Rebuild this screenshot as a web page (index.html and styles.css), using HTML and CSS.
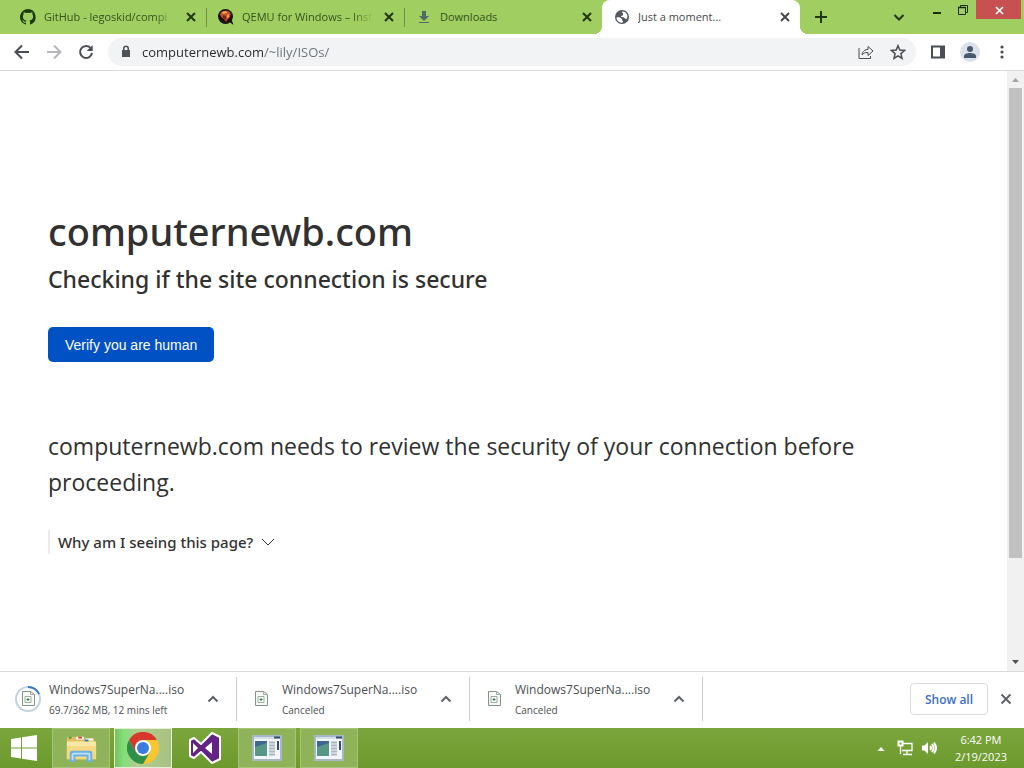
FILE: index.html
```
<!DOCTYPE html>
<html lang="en">
<head>
<meta charset="utf-8">
<title>Just a moment...</title>
<link rel="stylesheet" href="styles.css">
</head>
<body>
<header class="browser">
  <div class="tab-strip">
    <nav class="tabs">
      <div class="tab">
        <svg class="favicon" viewBox="0 0 16 16"><path fill="#1b3a12" d="M8 0a8 8 0 0 0-2.500 15.600c.4.1.5-.2.5-.4v-1.500c-2.200.5-2.700-1-2.700-1-.4-.9-.9-1.200-.9-1.200-.7-.5.1-.5.1-.5.8.1 1.200.8 1.200.8.7 1.300 1.900.9 2.300.7.1-.5.3-.9.5-1.100-1.800-.2-3.600-.9-3.600-4 0-.9.3-1.600.8-2.100-.1-.2-.4-1 .1-2.100 0 0 .7-.2 2.200.8a7.600 7.600 0 0 1 4 0c1.500-1 2.200-.8 2.200-.8.4 1.100.2 1.900.1 2.100.5.6.8 1.300.8 2.100 0 3.100-1.900 3.700-3.700 3.900.3.3.6.8.6 1.500v2.200c0 .2.1.5.6.4A8 8 0 0 0 8 0z"/></svg>
        <a class="title fade" href="#">GitHub - legoskid/compi</a>
        <button class="close" type="button" aria-label="Close tab"><svg viewBox="0 0 16 16"><path d="M4 4l8 8M12 4l-8 8"/></svg></button>
      </div>
      <div class="tab">
        <svg class="favicon" viewBox="0 0 16 16"><circle cx="7.500" cy="7.500" r="7.500" fill="#17110f"/><path fill="#17110f" d="M10 12l3-3 2.500 7z"/><path fill="#c4502c" d="M2 5c1-3 5-4 8-3 3 1 3 4 2 6l-3 3-1 2-2-3C4 9 2 7 2 5z"/><path fill="#f6a04d" d="M4 3l4-1 1 2-4 1zM9 6l2-1v3L9 9z"/><path fill="#7e2415" d="M5 6l3 1v4L5 9z"/></svg>
        <a class="title fade" href="#">QEMU for Windows – Inst</a>
        <button class="close" type="button" aria-label="Close tab"><svg viewBox="0 0 16 16"><path d="M4 4l8 8M12 4l-8 8"/></svg></button>
      </div>
      <div class="tab">
        <svg class="favicon" viewBox="0 0 16 16"><path fill="#536b67" d="M6 2h4v5h3l-5 5-5-5h3zM3 13h10v1H3z"/></svg>
        <a class="title" href="#">Downloads</a>
        <button class="close" type="button" aria-label="Close tab"><svg viewBox="0 0 16 16"><path d="M4 4l8 8M12 4l-8 8"/></svg></button>
      </div>
      <div class="tab active">
        <svg class="favicon" viewBox="0 0 16 16"><circle cx="8" cy="8" r="7" fill="#54575b"/><path fill="#fff" d="M2.500 8.500c2-.5 4 0 5 1s0 2 1.500 2.500l-.5 1.700C5 14 2.500 11.500 2.500 8.500zM8 2.600c-.5 1 .2 1.400 1 1.400v2c0 1-2 .5-2 1.500s2 .6 3 1 .8 1.500 2 1.500l1-.6C14.500 6 12 2.500 8 2.600z"/></svg>
        <a class="title" href="#">Just a moment...</a>
        <button class="close" type="button" aria-label="Close tab"><svg viewBox="0 0 16 16"><path d="M4 4l8 8M12 4l-8 8"/></svg></button>
      </div>
      <button class="new-tab" type="button" aria-label="New tab"><svg viewBox="0 0 16 16"><path d="M8 2v12M2 8h12"/></svg></button>
    </nav>
    <div class="win-controls">
      <button class="tab-search" type="button" aria-label="Search tabs"><svg viewBox="0 0 16 16"><path d="M3.500 6L8 10.500 12.500 6"/></svg></button>
      <button class="win-btn" type="button" aria-label="Minimize"><svg viewBox="0 0 16 16"><path d="M4 11h8"/></svg></button>
      <button class="win-btn" type="button" aria-label="Restore"><svg viewBox="0 0 16 16"><path d="M3.500 5.500h7v7h-7zM5.500 5V3.500h7v7H11" stroke-width="1"/><path d="M3 5.500h8" stroke-width="1.500"/></svg></button>
      <button class="win-close" type="button" aria-label="Close window"><svg viewBox="0 0 16 16"><path stroke-width="1.700" d="M5 5l7 7M12 5l-7 7"/></svg></button>
    </div>
  </div>
  <div class="toolbar">
    <button class="tool" type="button" aria-label="Back"><svg viewBox="0 0 16 16"><path d="M15 8H2M8 1.500L1.500 8 8 14.500"/></svg></button>
    <button class="tool" type="button" aria-label="Forward" disabled><svg viewBox="0 0 16 16"><path d="M1 8h13M8 1.500L14.500 8 8 14.500"/></svg></button>
    <button class="tool" type="button" aria-label="Reload"><svg viewBox="0 0 16 16"><path d="M13 4.500A6 6 0 1 0 14 9"/><path d="M14.700 1v6H8.700z" fill="#4a4d51" stroke="none"/></svg></button>
    <div class="omnibox">
      <svg class="lock" viewBox="0 0 16 16"><path fill="#4f5256" d="M5 6V4.500a3 3 0 0 1 6 0V6h1v7H4V6zm1.500 0h3V4.500a1.500 1.500 0 0 0-3 0z"/></svg>
      <input class="url" type="text" aria-label="Address" value="computernewb.com/~lily/ISOs/">
      <button class="tool" type="button" aria-label="Share"><svg class="thin" viewBox="0 0 16 16"><path d="M1 4v10.500h11.500V12M4 11c.5-4 3-5.500 6-5.500V2.500L15 7l-5 4.500v-3c-3 0-4.500.5-6 2.500z"/></svg></button>
      <button class="tool" type="button" aria-label="Bookmark"><svg class="thin" viewBox="0 0 16 16"><path stroke-width="1.500" d="M8 1.700l1.800 4.400 4.700.4L10.900 9.600l1.100 4.700L8 11.800l-4 2.500 1.100-4.700L1.500 6.500l4.700-.4z"/></svg></button>
    </div>
    <button class="tool side" type="button" aria-label="Side panel"><svg viewBox="0 0 16 16"><path d="M2 2.500h12v11H2z"/><path d="M10 2h4.500v12H10z" fill="#4a4d51" stroke="none"/></svg></button>
    <button class="tool" type="button" aria-label="Profile"><svg class="avatar" viewBox="0 0 20 20"><circle cx="10" cy="10" r="10" fill="#dbe1ec"/><circle cx="10" cy="7" r="3" fill="#49596b"/><path fill="#49596b" d="M4 16v-2c0-4 12-4 12 0v2z"/></svg></button>
    <button class="tool" type="button" aria-label="Menu"><svg viewBox="0 0 16 16"><g fill="#4a4d51" stroke="none"><circle cx="8" cy="3" r="1.600"/><circle cx="8" cy="8" r="1.600"/><circle cx="8" cy="13" r="1.600"/></g></svg></button>
  </div>
</header>

<div class="viewport">
  <main class="challenge">
    <h1>computernewb.com</h1>
    <h2>Checking if the site connection is secure</h2>
    <button class="verify" type="button">Verify you are human</button>
    <p class="review">computernewb.com needs to review the security of your connection before proceeding.</p>
    <button class="why" type="button">Why am I seeing this page? <svg viewBox="0 0 14 8"><path d="M1 1l6 6 6-6"/></svg></button>
  </main>
  <div class="scrollbar">
    <svg class="up" viewBox="0 0 17 17"><path d="M5 11l3.500-4 3.500 4z"/></svg>
    <div class="track"><div class="thumb"></div></div>
    <svg class="down" viewBox="0 0 17 17"><path d="M5 6l3.500 4L12 6z"/></svg>
  </div>
</div>

<section class="downloads">
  <div class="download">
    <svg class="file" viewBox="0 0 28 28"><circle cx="14" cy="14" r="12" fill="none" stroke="#c3d3dc" stroke-width="2"/><path d="M14 2a12 12 0 0 1 11 7" fill="none" stroke="#3977c6" stroke-width="2"/><path d="M8.500 6.500h8l4 3v11h-12z" fill="#f7faf7" stroke="#84938a"/><path d="M16.500 6.500v3h4M11 11.500h6v6h-6z" fill="none" stroke="#9dada2"/><path d="M14 13v3M12.500 14.500h3" stroke="#3d8350"/></svg>
    <div class="info"><a class="name" href="#">Windows7SuperNa....iso</a><span class="status">69.7/362 MB, 12 mins left</span></div>
    <button class="more" type="button" aria-label="Options"><svg viewBox="0 0 16 16"><path d="M3.500 10.500L8 6l4.500 4.500"/></svg></button>
  </div>
  <div class="download">
    <svg class="file" viewBox="0 0 28 28"><path d="M8.500 6.500h8l4 3v11h-12z" fill="#f7faf7" stroke="#84938a"/><path d="M16.500 6.500v3h4M11 11.500h6v6h-6z" fill="none" stroke="#9dada2"/><path d="M14 13v3M12.500 14.500h3" stroke="#3d8350"/></svg>
    <div class="info"><a class="name" href="#">Windows7SuperNa....iso</a><span class="status">Canceled</span></div>
    <button class="more" type="button" aria-label="Options"><svg viewBox="0 0 16 16"><path d="M3.500 10.500L8 6l4.500 4.500"/></svg></button>
  </div>
  <div class="download">
    <svg class="file" viewBox="0 0 28 28"><path d="M8.500 6.500h8l4 3v11h-12z" fill="#f7faf7" stroke="#84938a"/><path d="M16.500 6.500v3h4M11 11.500h6v6h-6z" fill="none" stroke="#9dada2"/><path d="M14 13v3M12.500 14.500h3" stroke="#3d8350"/></svg>
    <div class="info"><a class="name" href="#">Windows7SuperNa....iso</a><span class="status">Canceled</span></div>
    <button class="more" type="button" aria-label="Options"><svg viewBox="0 0 16 16"><path d="M3.500 10.500L8 6l4.500 4.500"/></svg></button>
  </div>
  <button class="show-all" type="button">Show all</button>
  <button class="more" type="button" aria-label="Close downloads bar"><svg viewBox="0 0 16 16"><path d="M3.500 3.500l9 9M12.500 3.500l-9 9"/></svg></button>
</section>

<footer class="taskbar">
  <button class="start" type="button" aria-label="Start"><svg viewBox="0 0 28 28"><path fill="#fff" d="M1 5l10-1.500v10H1zM12 3.300L27 1v12.500H12zM1 14.500h10v10L1 23zM12 14.500h15V27l-15-2.300z"/></svg></button>
  <button class="task open" type="button" aria-label="File Explorer"><svg viewBox="0 0 34 32"><path fill="#e3bb60" d="M2 4h9l2 2h18v22H2z"/><path fill="#f9e8a5" d="M2 9h31v18H2z"/><path fill="#f5d984" d="M2 14h31v14H2z"/><path fill="#fff" d="M12 4h8v3h-8zM22 6h8v2h-8z"/><path fill="#3c9f4a" d="M4 4h3v2H4z"/><path fill="#cf4b32" d="M14 4h4v2h-4z"/><path fill="#3f78b8" d="M21 7h4v2h-4z"/><path fill="#6dafe0" d="M5 31V22q0-3 3-3h18q3 0 3 3v9h-6v-6H11v6z"/><path fill="#b9e2f8" d="M7 29v-6q0-2 2-2h16q2 0 2 2v6h-2v-6H9v6z"/></svg></button>
  <button class="task open current" type="button" aria-label="Chrome"><svg viewBox="0 0 32 32"><path fill="#fac62f" d="M16 8h13.900A16 16 0 0 1 16 32l7-12z"/><path fill="#2f8f46" d="M2.100 8L9 20h14l-7 12A16 16 0 0 1 2.100 8z"/><path fill="#d8382c" d="M2.100 8L9 20l7-12h13.900A16 16 0 0 0 2.100 8z"/><circle cx="16" cy="16" r="8" fill="#fff"/><circle cx="16" cy="16" r="6" fill="#397ce0"/></svg></button>
  <button class="task" type="button" aria-label="Visual Studio"><svg viewBox="0 0 32 32"><path fill="#622384" stroke="#fff" stroke-width="2" stroke-linejoin="round" d="M23 1l8 4v22l-8 4-11-11-7 6-4-2V8l4-2 7 6z"/><path fill="#fff" d="M4 11l5 5-5 5zM23 10v12l-7-6z"/></svg></button>
  <button class="task open" type="button" aria-label="Application"><svg viewBox="0 0 32 32"><path fill="#f3f6fa" stroke="#a6b7c8" d="M2 4h28v24H2z"/><path fill="#d3deea" d="M3 5h26v2H3z"/><path fill="#3f668f" d="M4 9h12v15H4z"/><path fill="#579785" d="M4 15l12-4v13H4z"/><path stroke="#abb3bd" d="M18 10.500h6M18 13.500h6M18 16.500h6M18 19.500h6M18 22.500h6"/><path stroke="#344b6b" stroke-width="2" d="M27 9v9"/><path stroke="#344b6b" d="M23 5.500h6"/></svg></button>
  <button class="task open" type="button" aria-label="Application"><svg viewBox="0 0 32 32"><path fill="#f3f6fa" stroke="#a6b7c8" d="M2 4h28v24H2z"/><path fill="#d3deea" d="M3 5h26v2H3z"/><path fill="#3f668f" d="M4 9h12v15H4z"/><path fill="#579785" d="M4 15l12-4v13H4z"/><path stroke="#abb3bd" d="M18 10.500h6M18 13.500h6M18 16.500h6M18 19.500h6M18 22.500h6"/><path stroke="#344b6b" stroke-width="2" d="M27 9v9"/><path stroke="#344b6b" d="M23 5.500h6"/></svg></button>
  <div class="tray">
    <button type="button" aria-label="Show hidden icons"><svg viewBox="0 0 16 16"><path d="M4.500 11L8 7l3.500 4z" fill="#fff"/></svg></button>
    <button type="button" aria-label="Network"><svg viewBox="0 0 16 16"><g fill="none" stroke="#fff"><path d="M6 3.500h9v7H5M3.500 6v8M10 11v3M6 14.500h9" stroke-width="1.300"/><path d="M1.500 1.500h4v4h-4z"/></g></svg></button>
    <button type="button" aria-label="Volume"><svg viewBox="0 0 16 16"><path d="M1 5.500h2.500L7 2v12l-3.500-3.500H1z" fill="#fff"/><path d="M9 6q2 2 0 4M11 4q3 4 0 8M13 2.500q4 5.500 0 11" fill="none" stroke="#fff"/></svg></button>
    <div class="clock"><time>6:42 PM</time><time>2/19/2023</time></div>
  </div>
</footer>
</body>
</html>
```
FILE: styles.css
```
*{box-sizing:border-box;margin:0;padding:0}
html,body{height:100%}
body{display:flex;flex-direction:column;overflow:hidden;background:#fff;font-family:"Open Sans","Noto Sans",sans-serif;font-size:12px;color:#313131}
button{display:flex;align-items:center;justify-content:center;flex:none;border:0;background:none;font-family:inherit}
a{color:inherit;text-decoration:none}
svg{display:block;flex:none}
button svg{width:16px;height:16px;fill:none;stroke:#4a4d51;stroke-width:2}

/* tabs */
.tab-strip{display:flex;justify-content:space-between;height:34px;background:#a0ce60}
.tabs{display:flex;flex:1;min-width:0;padding-left:8px}
.tab{position:relative;display:flex;align-items:center;gap:8px;flex:0 1 198px;min-width:0;padding:0 7px 0 12px;font-size:11px;color:#35511f}
.tab:not(.active)::after{content:"";position:absolute;right:-1px;top:8px;width:1px;height:19px;background:#718f47}
.tab:nth-child(3)::after{display:none}
.tab .favicon{width:16px;height:16px}
.tab .title{flex:1;overflow:hidden;white-space:nowrap;line-height:34px}
.tab .fade{-webkit-mask-image:linear-gradient(to left,transparent,#000 20px);mask-image:linear-gradient(to left,transparent,#000 20px)}
.tab .close svg{stroke:#213611}
.tab.active{border-radius:8px 8px 0 0;background:#fff;color:#45484c}
.tab.active::before,.tab.active::after{content:"";position:absolute;bottom:0;width:8px;height:8px;background:radial-gradient(circle at 0 0,transparent 8px,#fff 8px)}
.tab.active::before{left:-8px}
.tab.active::after{right:-8px;background:radial-gradient(circle at 100% 0,transparent 8px,#fff 8px)}
.tab.active .close svg{stroke:#45484c}
.new-tab{width:42px}
.new-tab svg,.tab-search svg{stroke:#213611}
.win-controls{display:flex;align-items:flex-start;padding-right:3px}
.tab-search{width:50px;height:34px}
.win-btn{width:26px;height:19px}
.win-btn svg{stroke:#1b2d0d}
.win-close{width:45px;height:19px;background:#c75050}
.win-close svg{stroke:#fff}

/* toolbar */
.toolbar{display:flex;align-items:center;height:37px;padding:0 6px;border-bottom:1px solid #d9dadc}
.tool{width:32px;height:28px}
.tool:disabled svg{stroke:#b4b6b9}
.tool .thin{stroke-width:1}
.tool .avatar{width:20px;height:20px;stroke:none}
.tool.side{margin-left:6px}
.omnibox{display:flex;align-items:center;flex:1;min-width:0;height:28px;margin-left:6px;padding:0 2px 0 10px;border-radius:14px;background:#f1f3f4}
.lock{width:16px;height:16px}
.url{flex:1;min-width:0;height:28px;margin-left:8px;border:0;outline:0;background:linear-gradient(to right,#27292c 122px,#6b6f74 122px);-webkit-background-clip:text;background-clip:text;color:transparent;font-family:inherit;font-size:13px}

/* page */
.viewport{display:flex;flex:1;min-height:0}
.challenge{flex:1;min-width:0;padding:130px 48px 0;overflow:hidden}
h1,h2,.why{font-family:"Noto Sans","Open Sans",sans-serif;font-weight:500}
h1{font-size:38px;line-height:60px}
h2{font-size:23px;line-height:36px}
.verify{height:35px;margin-top:30px;padding:0 17px;border-radius:5px;background:#0051c3;font-family:"Liberation Sans",Arial,sans-serif;font-size:14px;color:#fff}
.review{max-width:864px;margin-top:66px;font-size:23px;line-height:36px}
.why{gap:8px;height:24px;margin-top:30px;padding-left:8px;border-left:2px solid #ebebeb;font-size:15px;color:#313131}
.why svg{width:14px;height:8px;stroke:#313131;stroke-width:1}
.scrollbar{display:flex;flex-direction:column;width:17px;background:#f1f1f1}
.scrollbar .up{fill:#a3a3a3}
.scrollbar .down{fill:#505050}
.track{flex:1;padding:0 2px}
.thumb{height:83%;background:#c1c1c1}

/* downloads */
.downloads{display:flex;align-items:center;height:57px;padding:0 6px 2px 4px;border-top:1px solid #d9dadc}
.download{display:flex;align-items:center;flex:0 1 233px;height:44px;padding:0 11px 0 10px;border-right:1px solid #c9cbce}
.file{width:28px;height:28px}
.info{display:flex;flex-direction:column;flex:1;margin-left:7px;padding-top:2px;white-space:nowrap;color:#4b4e52}
.name{font-size:12px;line-height:20px}
.status{font-size:10px;line-height:20px}
.more{width:24px;height:24px}
.more svg{stroke:#5f6368}
.show-all{width:78px;height:32px;margin:0 6px 0 auto;border:1px solid #d9dbdf;border-radius:4px;font-size:12px;font-weight:600;color:#3c6fc5}

/* taskbar */
.taskbar{display:flex;gap:4px;height:40px;background:linear-gradient(#7ba63d,#6c992d)}
.start{width:48px}
.start svg{width:28px;height:28px;stroke:none}
.task{width:58px;border:1px solid transparent}
.task svg{width:32px;height:32px;stroke:none}
.task.open{border-color:#a5c477;background:#8fb358}
.task.current{border-color:#e5efd8;background:linear-gradient(to right,#80bd5c,#80df78 15%,#b4cd92 40%,#a6c27e)}
.tray{display:flex;align-items:center;gap:8px;margin-left:auto;padding-right:17px}
.tray svg{stroke:none}
.clock{display:flex;flex-direction:column;margin-left:10px;text-align:center;font-size:11px;line-height:17px;color:#fff}
```
